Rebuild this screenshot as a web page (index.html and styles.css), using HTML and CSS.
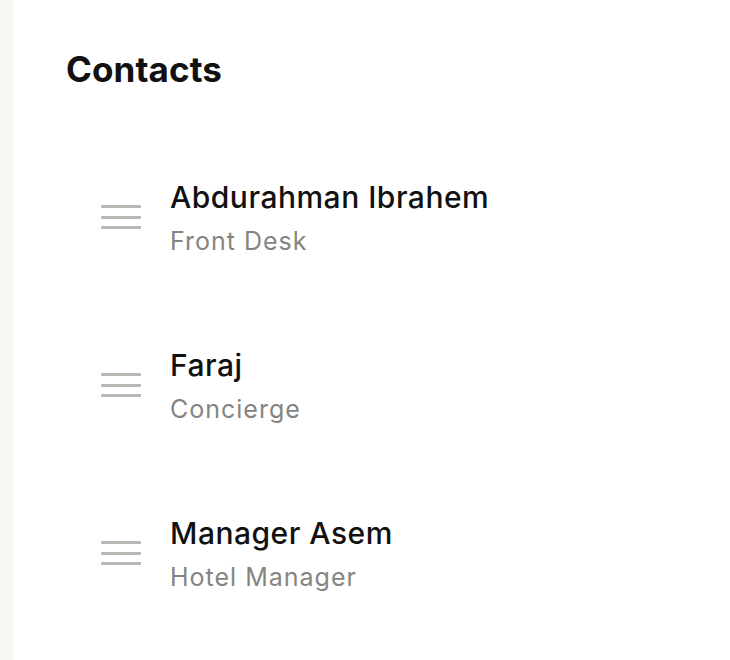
FILE: index.html
```html
<!DOCTYPE html>
<html lang="en">
<head>
  <meta charset="UTF-8" />
  <title>Contacts</title>
  <link rel="stylesheet" href="styles.css">
</head>
<body>
  <div class="sidebar"></div>

  <main class="panel">
    <h1 class="title">Contacts</h1>

    <ul class="contactList">
      <li class="contact">
        <span class="handle"><i></i><i></i><i></i></span>
        <div class="info">
          <div class="name">Abdurahman Ibrahem</div>
          <div class="role">Front Desk</div>
        </div>
      </li>
      <li class="contact">
        <span class="handle"><i></i><i></i><i></i></span>
        <div class="info">
          <div class="name">Faraj</div>
          <div class="role">Concierge</div>
        </div>
      </li>
      <li class="contact">
        <span class="handle"><i></i><i></i><i></i></span>
        <div class="info">
          <div class="name">Manager Asem</div>
          <div class="role">Hotel Manager</div>
        </div>
      </li>
    </ul>
  </main>
</body>
</html>
```

FILE: styles.css
```css
body {
  font-family: Inter, "Noto Sans", sans-serif;
  margin: 0;
  display: flex;
  min-height: 660px;
  background: #fff;
  color: #111;
}
.sidebar {
  width: 13px;
  flex-shrink: 0;
  background: #f7f7f3;
}
.panel {
  flex: 1;
  padding: 48px 0 0 53px;
}
.title {
  margin: 0;
  font-size: 35px;
  font-weight: 700;
  line-height: 42px;
  letter-spacing: 0.1px;
}
.contactList {
  list-style: none;
  margin: 43px 0 0;
  padding: 0 0 0 35px;
}
.contact {
  display: flex;
  align-items: center;
  gap: 29px;
  height: 168px;
}
.handle {
  display: flex;
  flex-direction: column;
  gap: 7.5px;
  width: 40px;
}
.handle i {
  display: block;
  height: 3px;
  background: #b8b8b3;
  border-radius: 1px;
}
.name {
  font-size: 30px;
  font-weight: 500;
  line-height: 36px;
  letter-spacing: 0.5px;
}
.role {
  font-size: 25px;
  line-height: 30px;
  letter-spacing: 1px;
  color: #858580;
  margin-top: 11px;
}
```
